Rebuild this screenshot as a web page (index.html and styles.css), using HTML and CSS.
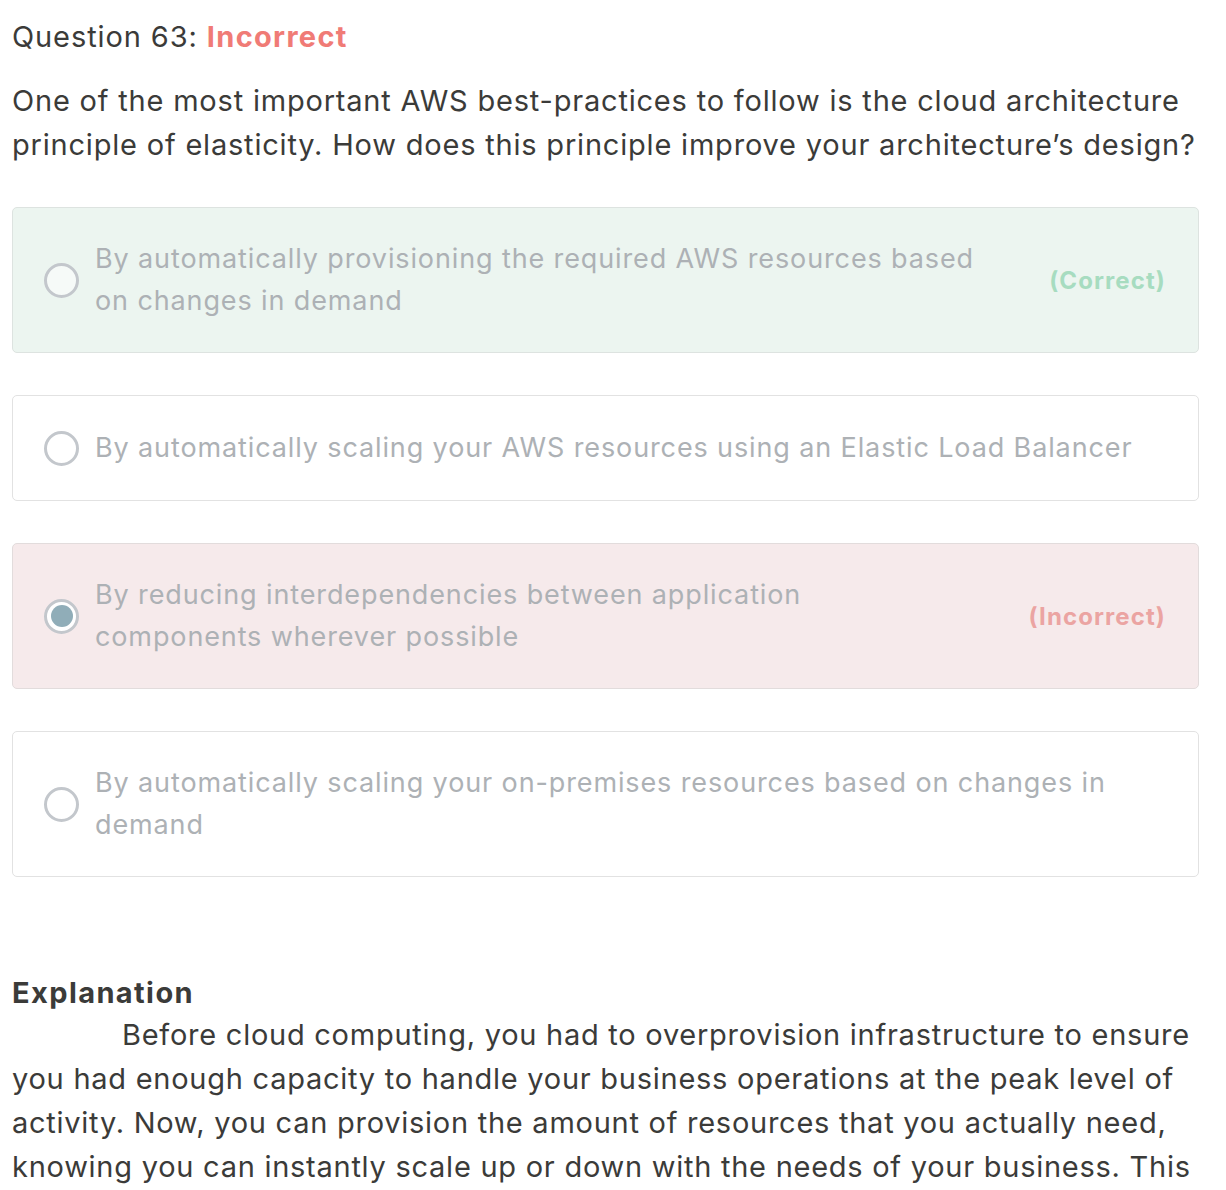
FILE: index.html
```html
<!DOCTYPE html>
<html lang="en">
<head>
<meta charset="utf-8">
<title>Question 63</title>
<link rel="stylesheet" href="styles.css">
</head>
<body>
<main class="page">
  <h2 class="q-title">Question 63: <span class="q-status">Incorrect</span></h2>
  <p class="q-text">One of the most important AWS best-practices to follow is the cloud architecture principle of elasticity. How does this principle improve your architecture’s design?</p>

  <div class="options">
    <div class="option option--correct">
      <span class="radio"></span>
      <span class="option-text">By automatically provisioning the required AWS resources based on changes in demand</span>
      <span class="option-label label--correct">(Correct)</span>
    </div>
    <div class="option">
      <span class="radio"></span>
      <span class="option-text">By automatically scaling your AWS resources using an Elastic Load Balancer</span>
    </div>
    <div class="option option--incorrect">
      <span class="radio radio--checked"></span>
      <span class="option-text">By reducing interdependencies between application components wherever possible</span>
      <span class="option-label label--incorrect">(Incorrect)</span>
    </div>
    <div class="option">
      <span class="radio"></span>
      <span class="option-text">By automatically scaling your on-premises resources based on changes in demand</span>
    </div>
  </div>

  <section class="explanation">
    <h3 class="exp-title">Explanation</h3>
    <p class="exp-text">Before cloud computing, you had to overprovision infrastructure to ensure you had enough capacity to handle your business operations at the peak level of activity. Now, you can provision the amount of resources that you actually need, knowing you can instantly scale up or down with the needs of your business. This reduces costs and improves your ability to meet your users’ demands.</p>
  </section>
</main>
</body>
</html>
```

FILE: styles.css
```css
html, body {
  margin: 0;
  padding: 0;
  background: #ffffff;
}

body {
  font-family: Inter, "Noto Sans", "Liberation Sans", sans-serif;
  color: #3b3b39;
}

.page {
  width: 1187px;
  margin-left: 12px;
  padding-top: 15px;
}

.q-title {
  margin: 0;
  font-size: 29px;
  font-weight: 400;
  line-height: 44px;
  letter-spacing: 0.9px;
}

.q-status {
  color: #f07b76;
  font-weight: 700;
  letter-spacing: 1.3px;
}

.q-text {
  margin: 20px 0 0;
  font-size: 29px;
  line-height: 44px;
  letter-spacing: 0.8px;
}

.options {
  margin-top: 40px;
  display: flex;
  flex-direction: column;
  gap: 42px;
}

.option {
  display: flex;
  align-items: center;
  min-height: 44px;
  padding: 30px 32px 30px 31px;
  border: 1px solid #e2e2e2;
  border-radius: 5px;
  background: #ffffff;
}

.option--correct {
  background: #ecf5f0;
  border-color: #dde3e0;
}

.option--incorrect {
  background: #f6eaeb;
  border-color: #e2dcdc;
}

.radio {
  flex: none;
  box-sizing: border-box;
  width: 35px;
  height: 35px;
  border: 3px solid #c3c7cc;
  border-radius: 50%;
  background: rgba(255, 255, 255, 0.5);
  margin-right: 16px;
}

.radio--checked {
  background: #ffffff;
  display: flex;
  align-items: center;
  justify-content: center;
}

.radio--checked::after {
  content: "";
  width: 22px;
  height: 22px;
  border-radius: 50%;
  background: #90adb8;
}

.option-text {
  flex: 1;
  font-size: 27px;
  line-height: 42px;
  letter-spacing: 0.88px;
  color: #adb1b5;
}

.option-label {
  flex: none;
  margin-left: 74px;
  font-size: 24px;
  font-weight: 700;
  letter-spacing: 1.1px;
}

.label--correct {
  color: #a7dcc0;
}

.label--incorrect {
  color: #eba4a2;
}

.explanation {
  margin-top: 96px;
}

.exp-title {
  margin: 0;
  font-size: 29px;
  font-weight: 700;
  line-height: 40px;
  letter-spacing: 1.4px;
}

.exp-text {
  margin: 0;
  font-size: 29px;
  line-height: 44px;
  letter-spacing: 0.74px;
  text-indent: 110px;
}
```
